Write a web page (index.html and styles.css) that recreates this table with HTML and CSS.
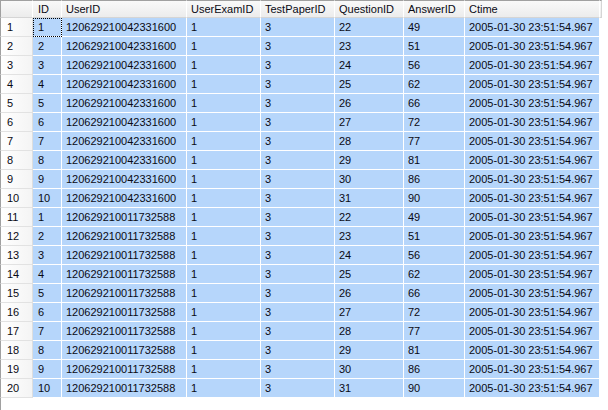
FILE: index.html
```html
<!DOCTYPE html>
<html>
<head>
<meta charset="utf-8">
<link rel="stylesheet" href="styles.css">
</head>
<body>
<div class="grid-wrap">
<table class="grid">
<colgroup>
<col class="c-rh"><col class="c-id"><col class="c-user"><col class="c-exam"><col class="c-paper"><col class="c-q"><col class="c-a"><col class="c-time"><col class="c-fill">
</colgroup>
<thead>
<tr><th class="corner"></th><th class="idc">ID</th><th>UserID</th><th>UserExamID</th><th>TestPaperID</th><th>QuestionID</th><th>AnswerID</th><th>Ctime</th><th class="fill"></th></tr>
</thead>
<tbody id="rows">
<tr><td class="rh">1</td><td class="idc focus">1</td><td>120629210042331600</td><td>1</td><td>3</td><td>22</td><td>49</td><td>2005-01-30 23:51:54.967</td></tr>
<tr><td class="rh">2</td><td class="idc">2</td><td>120629210042331600</td><td>1</td><td>3</td><td>23</td><td>51</td><td>2005-01-30 23:51:54.967</td></tr>
<tr><td class="rh">3</td><td class="idc">3</td><td>120629210042331600</td><td>1</td><td>3</td><td>24</td><td>56</td><td>2005-01-30 23:51:54.967</td></tr>
<tr><td class="rh">4</td><td class="idc">4</td><td>120629210042331600</td><td>1</td><td>3</td><td>25</td><td>62</td><td>2005-01-30 23:51:54.967</td></tr>
<tr><td class="rh">5</td><td class="idc">5</td><td>120629210042331600</td><td>1</td><td>3</td><td>26</td><td>66</td><td>2005-01-30 23:51:54.967</td></tr>
<tr><td class="rh">6</td><td class="idc">6</td><td>120629210042331600</td><td>1</td><td>3</td><td>27</td><td>72</td><td>2005-01-30 23:51:54.967</td></tr>
<tr><td class="rh">7</td><td class="idc">7</td><td>120629210042331600</td><td>1</td><td>3</td><td>28</td><td>77</td><td>2005-01-30 23:51:54.967</td></tr>
<tr><td class="rh">8</td><td class="idc">8</td><td>120629210042331600</td><td>1</td><td>3</td><td>29</td><td>81</td><td>2005-01-30 23:51:54.967</td></tr>
<tr><td class="rh">9</td><td class="idc">9</td><td>120629210042331600</td><td>1</td><td>3</td><td>30</td><td>86</td><td>2005-01-30 23:51:54.967</td></tr>
<tr><td class="rh">10</td><td class="idc">10</td><td>120629210042331600</td><td>1</td><td>3</td><td>31</td><td>90</td><td>2005-01-30 23:51:54.967</td></tr>
<tr><td class="rh">11</td><td class="idc">1</td><td>120629210011732588</td><td>1</td><td>3</td><td>22</td><td>49</td><td>2005-01-30 23:51:54.967</td></tr>
<tr><td class="rh">12</td><td class="idc">2</td><td>120629210011732588</td><td>1</td><td>3</td><td>23</td><td>51</td><td>2005-01-30 23:51:54.967</td></tr>
<tr><td class="rh">13</td><td class="idc">3</td><td>120629210011732588</td><td>1</td><td>3</td><td>24</td><td>56</td><td>2005-01-30 23:51:54.967</td></tr>
<tr><td class="rh">14</td><td class="idc">4</td><td>120629210011732588</td><td>1</td><td>3</td><td>25</td><td>62</td><td>2005-01-30 23:51:54.967</td></tr>
<tr><td class="rh">15</td><td class="idc">5</td><td>120629210011732588</td><td>1</td><td>3</td><td>26</td><td>66</td><td>2005-01-30 23:51:54.967</td></tr>
<tr><td class="rh">16</td><td class="idc">6</td><td>120629210011732588</td><td>1</td><td>3</td><td>27</td><td>72</td><td>2005-01-30 23:51:54.967</td></tr>
<tr><td class="rh">17</td><td class="idc">7</td><td>120629210011732588</td><td>1</td><td>3</td><td>28</td><td>77</td><td>2005-01-30 23:51:54.967</td></tr>
<tr><td class="rh">18</td><td class="idc">8</td><td>120629210011732588</td><td>1</td><td>3</td><td>29</td><td>81</td><td>2005-01-30 23:51:54.967</td></tr>
<tr><td class="rh">19</td><td class="idc">9</td><td>120629210011732588</td><td>1</td><td>3</td><td>30</td><td>86</td><td>2005-01-30 23:51:54.967</td></tr>
<tr><td class="rh">20</td><td class="idc">10</td><td>120629210011732588</td><td>1</td><td>3</td><td>31</td><td>90</td><td>2005-01-30 23:51:54.967</td></tr>
</tbody>
</table>
</div>
</body>
</html>
```
FILE: styles.css
```css
html, body {
  margin: 0;
  padding: 0;
  background: #ffffff;
}
body {
  width: 608px;
  height: 410px;
  overflow: hidden;
  font-family: "Liberation Sans", Arial, sans-serif;
  font-size: 11px;
  color: #0a0a14;
}
.grid-wrap {
  height: 410px;
  border-left: 1px solid #a0a0a0;
  box-sizing: border-box;
}
.grid {
  border-collapse: separate;
  border-spacing: 0;
  table-layout: fixed;
  width: 602px;
  margin-left: -1px;
}
.c-rh { width: 33px; }
.c-id { width: 29px; }
.c-user { width: 125px; }
.c-exam { width: 74px; }
.c-paper { width: 74px; }
.c-q { width: 69px; }
.c-a { width: 61px; }
.c-time { width: 135px; }
.c-fill { width: 2px; }

th {
  height: 18px;
  padding: 0 0 0 4px;
  box-sizing: border-box;
  text-align: left;
  font-weight: normal;
  white-space: nowrap;
  background: linear-gradient(#f9f9f9, #ececec);
  border-top: 1px solid #a0a0a0;
  border-right: 1px solid #ffffff;
  border-bottom: 1px solid #d5d5d5;
  overflow: hidden;
}
th.corner {
  border-left: 1px solid #a0a0a0;
}
th.fill {
  padding: 0;
  border-right: 1px solid #d5d5d5;
}
td {
  height: 19px;
  box-sizing: border-box;
  padding: 0 0 0 4px;
  background: #b6d6fb;
  border-right: 1px solid #ffffff;
  border-bottom: 1px solid #ffffff;
  white-space: nowrap;
  overflow: hidden;
}
th.idc, td.idc {
  padding-left: 5px;
}
td.rh {
  padding-left: 6px;
  background: linear-gradient(90deg, #ffffff, #f4f4f4);
  border-left: 1px solid #a0a0a0;
  border-right: 1px solid #dedede;
  border-bottom: 1px solid #e2e2e2;
}
td.focus {
  outline: 1px dotted #000000;
  outline-offset: -1px;
}
```
